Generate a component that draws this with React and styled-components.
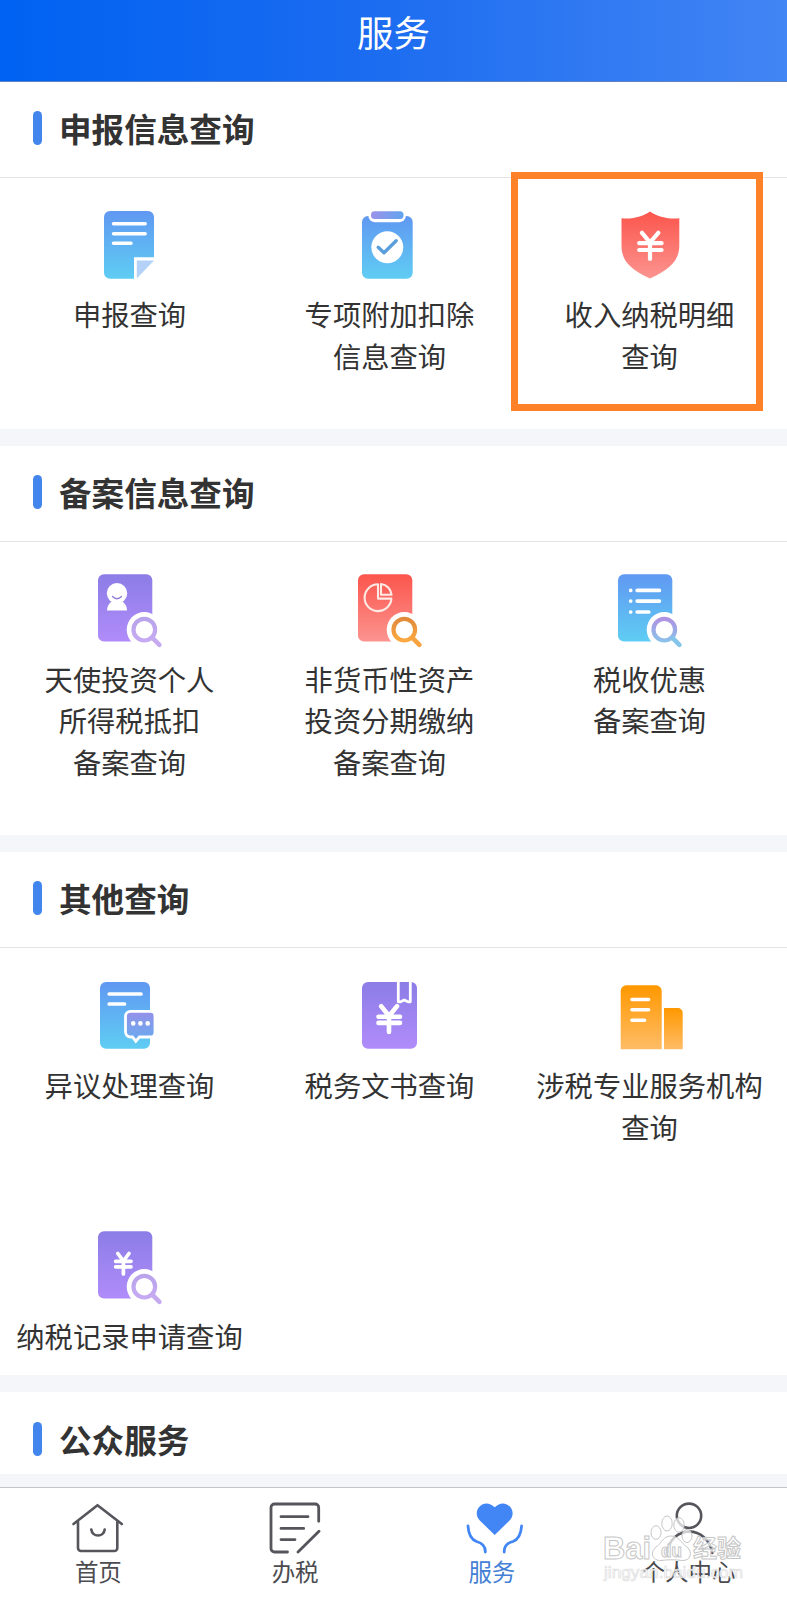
import React from "react";
import styled, { createGlobalStyle } from "styled-components";

const GlobalStyle = createGlobalStyle`
  * { box-sizing: border-box; }
  body {
    margin: 0;
    background: #fff;
    font-family: "Noto Sans CJK SC", "Noto Sans", sans-serif;
    color: #333;
  }
`;

const Page = styled.div`
  width: 787px;
  height: 1600px;
  display: flex;
  flex-direction: column;
  overflow: hidden;
  background: #f4f6fa;
`;

const TopBar = styled.header`
  flex: none;
  height: 82px;
  padding-bottom: 17px;
  display: flex;
  align-items: center;
  justify-content: center;
  background: linear-gradient(90deg, #0062f2, #1a6bf0 45%, #4285f4);
  border-bottom: 1px solid #5c82c4;
`;

const PageTitle = styled.h1`
  margin: 0;
  font-size: 36.5px;
  line-height: 52px;
  font-weight: 400;
  color: #fff;
`;

const Content = styled.main`
  flex: 1;
  min-height: 0;
  display: flex;
  flex-direction: column;
  gap: 17px;
`;

const Section = styled.section`
  flex: none;
  background: #fff;
`;

const SectionHeader = styled.div`
  height: ${(p) => (p.$bare ? 82 : 96)}px;
  padding: ${(p) => (p.$bare ? 30 : 29)}px 0 0 33px;
  display: flex;
  align-items: flex-start;
  gap: 17px;
  border-bottom: ${(p) => (p.$bare ? "none" : "1px solid #e4e4e6")};
`;

const Marker = styled.span`
  width: 9px;
  height: 34px;
  border-radius: 4.5px;
  background: #4285ec;
`;

const SectionTitle = styled.h2`
  margin: 0;
  font-size: 32.6px;
  line-height: 34px;
  font-weight: 700;
`;

const ItemGrid = styled.div`
  display: grid;
  grid-template-columns: repeat(3, 260px);
  grid-template-rows: ${(p) => p.$rows};
  margin-left: -1px;
`;

const Item = styled.div`
  position: relative;
  padding-top: ${(p) => p.$top}px;
  display: flex;
  flex-direction: column;
  align-items: center;
`;

const ItemIcon = styled.svg`
  width: 80px;
  height: 80px;
  flex: none;
  overflow: visible;
`;

const ItemLabel = styled.div`
  margin-top: 9px;
  padding-left: 1px;
  font-size: 28.3px;
  line-height: 41.6px;
  white-space: pre-line;
  text-align: center;
`;

const Highlight = styled.div`
  position: absolute;
  left: -8px;
  top: -6px;
  width: 252px;
  height: 239px;
  border: 7px solid #ff8229;
`;

const TabBar = styled.nav`
  position: relative;
  flex: none;
  height: 113px;
  display: grid;
  grid-template-columns: repeat(4, 1fr);
  background: #fff;
  border-top: 1px solid #c3c5c8;
`;

const Tab = styled.div`
  padding-top: 10px;
  display: flex;
  flex-direction: column;
  align-items: center;
  color: ${(p) => (p.$active ? "#4285f4" : "#55555c")};
`;

const TabLabel = styled.span`
  font-size: 23.5px;
  line-height: 27px;
  color: ${(p) => (p.$active ? "#4480d6" : "#4c4c50")};
`;

const TabIcon = styled.svg`
  width: 60px;
  height: 60px;
  overflow: visible;
  fill: none;
  stroke: currentColor;
  stroke-width: 2.6;
  stroke-linecap: round;
  stroke-linejoin: round;
`;

const Watermark = styled.svg`
  position: absolute;
  left: 600px;
  top: 20px;
  width: 160px;
  height: 80px;
`;

const gradients = {
  blue: ["#6098f2", "#5fcdf3"],
  purple: ["#8c7de6", "#b08cfa"],
  red: ["#fb554c", "#fc9490"],
  orange: ["#ff9800", "#ffbc66"],
  lilac: ["#b9a3ea", "#c5aaf3"],
  amber: ["#e18a3c", "#fba940"],
  bubble: ["#9490e8", "#68acf0"],
};

const GradientDefs = () => (
  <svg width="0" height="0" style={{ position: "absolute" }} aria-hidden="true">
    <defs>
      {Object.entries(gradients).map(([name, [from, to]]) => (
        <linearGradient key={name} id={name} x1="0" y1="0" x2="0" y2="1">
          <stop offset="0" stopColor={from} />
          <stop offset="1" stopColor={to} />
        </linearGradient>
      ))}
      <linearGradient id="clip" x1="0" y1="0" x2="1" y2="0">
        <stop offset="0" stopColor="#9b92ea" />
        <stop offset="1" stopColor="#62a4ef" />
      </linearGradient>
      <linearGradient id="glass" gradientUnits="userSpaceOnUse" x1="55" y1="48" x2="55" y2="78">
        <stop offset="0" stopColor="#b08fe2" />
        <stop offset="1" stopColor="#83cdec" />
      </linearGradient>
    </defs>
  </svg>
);

const Card = ({ fill }) => <rect x="9" y="5.2" width="54.3" height="67.4" rx="6" fill={`url(#${fill})`} />;

const Magnifier = ({ stroke, handle }) => (
  <g fill="none">
    <circle cx="55.3" cy="60.7" r="17.6" fill="#fff" />
    <circle cx="55.3" cy="60.7" r="10.8" stroke={`url(#${stroke})`} strokeWidth="4.2" />
    <path d="M64 69.4 70.4 75.8" stroke={handle} strokeWidth="4.6" strokeLinecap="round" />
  </g>
);

const icons = {
  declare: (
    <>
      <path d="M21 7H59a6 6 0 0 1 6 6V53.3H45V74.7H21a6 6 0 0 1-6-6V13a6 6 0 0 1 6-6Z" fill="url(#blue)" />
      <path d="M47.8 56.5H65L47.8 74.4Z" fill="#b4d2f8" />
      <path d="M24.5 19.7H56.2M24.5 29.7H56.2M24.5 39.3H42" stroke="#fff" strokeWidth="3.5" strokeLinecap="round" />
    </>
  ),
  deduct: (
    <>
      <rect x="13" y="12" width="50.7" height="62.7" rx="6" fill="url(#blue)" />
      <rect x="19.3" y="4.5" width="37.6" height="13.8" rx="6.9" fill="#fff" />
      <rect x="22" y="7.3" width="32.5" height="7.8" rx="3.5" fill="url(#clip)" />
      <circle cx="38.3" cy="43.3" r="16" fill="#fff" />
      <path d="M29.2 43.3 35 48.8 47.2 36.8" fill="none" stroke="#5a9fdc" strokeWidth="3.4" strokeLinecap="round" strokeLinejoin="round" />
    </>
  ),
  shield: (
    <>
      <path d="M41 7.5C47.5 12 58 15.6 70.3 14.3V41C70.3 54 64.5 64 41 74.5C17.5 64 12.5 54 12.5 41V14.3C24 15.6 34.5 12 41 7.5Z" fill="url(#red)" />
      <path d="M33 28.8 41 38.5 49.3 28.8M30.2 39.2H52.6M30.2 46H52.6M41 38.5V55" fill="none" stroke="#fff" strokeWidth="4.2" strokeLinecap="round" />
    </>
  ),
  angel: (
    <>
      <Card fill="purple" />
      <circle cx="28" cy="24.3" r="10.2" fill="#fff" />
      <path d="M18 41.4C18.3 36 21 33.5 23.5 32H32.5C35 33.5 37.8 36 38 41.4Z" fill="#fff" />
      <path d="M23.5 27.5Q28 32 32.5 27.5" fill="none" stroke="#8d78d8" strokeWidth="1.3" strokeLinecap="round" />
      <Magnifier stroke="lilac" handle="#c5aaf0" />
    </>
  ),
  asset: (
    <>
      <Card fill="red" />
      <path d="M29 15.3A13.4 13.4 0 1 0 42.4 29.6H29ZM32 15V25.8H42.6A12 12 0 0 0 32 15Z" fill="none" stroke="#ffe9e4" strokeWidth="2.1" strokeLinejoin="round" />
      <Magnifier stroke="amber" handle="#f9a340" />
    </>
  ),
  benefit: (
    <>
      <Card fill="blue" />
      <path d="M21.7 21.4h.01M21.7 32.1h.01M21.7 43h.01M28.2 21.4H50.4M28.2 32.1H50.4M28.2 43H39.8" stroke="#fff" strokeWidth="3.7" strokeLinecap="round" />
      <Magnifier stroke="glass" handle="#84c5ea" />
    </>
  ),
  objection: (
    <>
      <rect x="11" y="7" width="50" height="66.7" rx="6" fill="url(#blue)" />
      <path d="M20.2 19H52M20.2 29H35.5" stroke="#fff" strokeWidth="3.7" strokeLinecap="round" />
      <path d="M41.5 36.4H61.5a4.5 4.5 0 0 1 4.5 4.5V57.5a4.5 4.5 0 0 1-4.5 4.5H50.5L46.8 66.2 43.5 62H41.5a5 5 0 0 1-5-5V41.4a5 5 0 0 1 5-5Z" fill="url(#bubble)" stroke="#fff" strokeWidth="2.8" />
      <path d="M44.2 48.4h.01M51.4 48.4h.01M58.7 48.4h.01" stroke="#fff" strokeWidth="4.6" strokeLinecap="round" />
    </>
  ),
  document: (
    <>
      <rect x="13" y="7" width="55" height="66.7" rx="6" fill="url(#purple)" />
      <path d="M49.3 7V26.8H51.6L55.3 25 59 26.8H61.3V7" fill="none" stroke="#fff" strokeWidth="2.8" strokeLinejoin="round" />
      <path d="M32.2 31.3 40 41 48 31.3M29.5 41.7H51M29.5 47.9H51M40 41V57" fill="none" stroke="#fff" strokeWidth="4.6" strokeLinecap="round" />
    </>
  ),
  agency: (
    <>
      <path d="M11.7 74.3V15.8a5.5 5.5 0 0 1 5.5-5.5h30a5.5 5.5 0 0 1 5.5 5.5V74.3Z" fill="url(#orange)" />
      <path d="M55 74.3V33H69a4.7 4.7 0 0 1 4.7 4.7V74.3Z" fill="url(#orange)" />
      <path d="M23 24.5H39.6M23 34.8H39.6M23 45.3H35.6" stroke="#fff" strokeWidth="3.6" strokeLinecap="round" />
    </>
  ),
  record: (
    <>
      <Card fill="purple" />
      <path d="M28.8 27.5 34.4 35 40 27.5M26.6 35.3H42M26.6 40.8H42M34.4 35V48" fill="none" stroke="#fff" strokeWidth="3.7" strokeLinecap="round" />
      <Magnifier stroke="lilac" handle="#c5aaf0" />
    </>
  ),
};

const sections = [
  {
    title: "申报信息查询",
    rows: "251px",
    itemTop: 26,
    items: [
      { icon: "declare", label: "申报查询" },
      { icon: "deduct", label: "专项附加扣除\n信息查询" },
      { icon: "shield", label: "收入纳税明细\n查询", highlighted: true },
    ],
  },
  {
    title: "备案信息查询",
    rows: "293px",
    itemTop: 26.6,
    items: [
      { icon: "angel", label: "天使投资个人\n所得税抵扣\n备案查询" },
      { icon: "asset", label: "非货币性资产\n投资分期缴纳\n备案查询" },
      { icon: "benefit", label: "税收优惠\n备案查询" },
    ],
  },
  {
    title: "其他查询",
    rows: "251px 176px",
    itemTop: 27,
    items: [
      { icon: "objection", label: "异议处理查询" },
      { icon: "document", label: "税务文书查询" },
      { icon: "agency", label: "涉税专业服务机构\n查询" },
      { icon: "record", label: "纳税记录申请查询" },
    ],
  },
  { title: "公众服务", items: [] },
];

const tabs = [
  {
    label: "首页",
    icon: (
      <path d="M5.5 26 29.5 7.2 53.8 26M10 23.5V50a3 3 0 0 0 3 3H46.3a3 3 0 0 0 3-3V23.5M23.3 31.5C24.3 39.6 35.7 39.6 36.7 31.5" />
    ),
  },
  {
    label: "办税",
    icon: (
      <path strokeWidth="2.8" d="M22.5 54H9.5a3.5 3.5 0 0 1-3.5-3.5V9.5A3.5 3.5 0 0 1 9.5 6H50.2a3.5 3.5 0 0 1 3.5 3.5V23.3M33 54 54 33.2M16 18.7H43M16 30.4H38.7M16 41.6H30" />
    ),
  },
  {
    label: "服务",
    active: true,
    icon: (
      <>
        <path d="M32.7 37 17.8 22.5C8.5 12.5 22.5-1.5 32.7 9.3C42.9-1.5 56.9 12.5 47.6 22.5Z" fill="currentColor" stroke="none" />
        <path strokeWidth="2.8" d="M6 28C6.5 36 9 41.5 14.5 43.5C20.5 45 23.5 48 23.3 54M59.6 28C59 36 56.5 41.5 51 43.5C45 45 42 48 42.2 54" />
      </>
    ),
  },
  {
    label: "个人中心",
    icon: (
      <>
        <circle cx="30" cy="17.8" r="12.2" />
        <path d="M7.8 55C12 26.5 48.5 26.5 53.3 55" />
      </>
    ),
  },
];

const BrandMark = () => (
  <Watermark viewBox="0 0 160 80">
    <g fill="#fff" fillOpacity="0.72" stroke="#c6c6c6" strokeWidth="1">
      <ellipse cx="56" cy="24.5" rx="5" ry="6.8" />
      <ellipse cx="67" cy="15.5" rx="5.2" ry="7.5" />
      <ellipse cx="79" cy="17" rx="5.2" ry="7.2" />
      <ellipse cx="87" cy="28" rx="5" ry="6.5" />
      <path d="M71 28C63 28 62 35 56 39C49 45 53 53 61 52.5C68 51.5 76 51.5 82 52.5C91 53 93 44 87 39C81 35 79 28 71 28Z" />
      <g fontFamily="Liberation Sans, sans-serif" fontWeight="700">
        <text x="3" y="51" fontSize="32" textLength="48" lengthAdjust="spacingAndGlyphs">Bai</text>
        <text x="61" y="49" fontSize="18" textLength="21" lengthAdjust="spacingAndGlyphs">du</text>
      </g>
      <text x="93" y="49" fontSize="24" fontWeight="700">经验</text>
    </g>
    <text x="4" y="70" fontSize="16.5" fontFamily="Liberation Sans, sans-serif" fill="#fff" fillOpacity="0.8" stroke="#dedede" strokeWidth="0.7" textLength="139" lengthAdjust="spacingAndGlyphs">
      jingyan.baidu.com
    </text>
  </Watermark>
);

export default function App() {
  return (
    <Page>
      <GlobalStyle />
      <GradientDefs />
      <TopBar>
        <PageTitle>服务</PageTitle>
      </TopBar>
      <Content>
        {sections.map((section) => (
          <Section key={section.title}>
            <SectionHeader $bare={section.items.length === 0}>
              <Marker />
              <SectionTitle>{section.title}</SectionTitle>
            </SectionHeader>
            {section.items.length > 0 && (
              <ItemGrid $rows={section.rows}>
                {section.items.map((item) => (
                  <Item key={item.label} $top={section.itemTop}>
                    <ItemIcon viewBox="0 0 80 80">{icons[item.icon]}</ItemIcon>
                    <ItemLabel>{item.label}</ItemLabel>
                    {item.highlighted && <Highlight />}
                  </Item>
                ))}
              </ItemGrid>
            )}
          </Section>
        ))}
      </Content>
      <TabBar>
        {tabs.map((tab) => (
          <Tab key={tab.label} $active={tab.active}>
            <TabIcon viewBox="0 0 60 60">{tab.icon}</TabIcon>
            <TabLabel $active={tab.active}>{tab.label}</TabLabel>
          </Tab>
        ))}
        <BrandMark />
      </TabBar>
    </Page>
  );
}
